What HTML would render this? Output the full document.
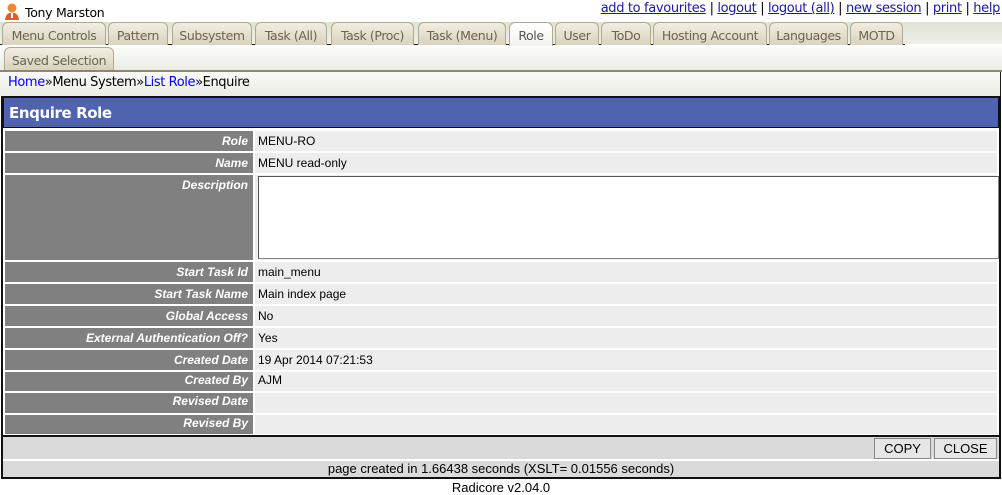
<!DOCTYPE html>
<html><head><style>
*{margin:0;padding:0;box-sizing:border-box}
body{width:1002px;height:494px;background:#fff;font-family:Tahoma,"DejaVu Sans",sans-serif;font-size:13px;position:relative;overflow:hidden}
.a{position:absolute}
.t{position:absolute;top:22px;height:23px;border:1px solid #b3a98a;border-bottom:none;border-radius:6px 6px 0 0;background:linear-gradient(#f1eee3,#d8d2bd);color:#6d6450;font-size:12.5px;line-height:25px;text-align:center;font-family:"DejaVu Sans",sans-serif;letter-spacing:-0.4px}
.lnk a{color:#1a1a9e;text-decoration:underline}
.lb{position:absolute;left:5px;width:248px;background:#808080;color:#fff;font:italic bold 12px "Liberation Sans",Arial,sans-serif;text-align:right;padding-right:5px;line-height:20px}
.vl{position:absolute;left:255px;width:742px;background:#ededed;font:12px "Liberation Sans",Arial,sans-serif;padding-left:3px;line-height:20px}
.btn{position:absolute;top:438px;height:21px;border:1px solid #888;background:#e6e6e6;font:13px "Liberation Sans",Arial,sans-serif;text-align:center;line-height:19px}
</style></head><body>
<div class="a" style="left:4px;top:2px;width:16px;height:18px">
<svg width="16" height="18"><circle cx="8" cy="6" r="4.5" fill="#e88a3a"/><path d="M1 18 Q2 10 8 11 Q14 10 15 18Z" fill="#d9602a"/><rect x="7" y="11" width="2" height="5" fill="#fff"/></svg></div>
<div class="a" style="left:25px;top:5px;font-family:'DejaVu Sans',sans-serif;font-size:12.5px;letter-spacing:-0.3px">Tony Marston</div>
<div class="a lnk" style="right:2px;top:1px;font-family:'DejaVu Sans',sans-serif;font-size:13px;letter-spacing:-0.35px"><a>add to favourites</a> | <a>logout</a> | <a>logout (all)</a> | <a>new session</a> | <a>print</a> | <a>help</a></div>
<div class="a" style="left:0;top:22px;width:1002px;height:23px;background:linear-gradient(#dfe3d6,#eef0ea)"></div>
<div class="a" style="left:0;top:44px;width:1002px;height:27px;background:linear-gradient(#fff,#e9e9e5)"></div>
<div class="a" style="left:0;top:44px;width:905px;height:1px;background:#222"></div>
<div class="t" style="left:2px;width:104px">Menu Controls</div>
<div class="t" style="left:108px;width:60px">Pattern</div>
<div class="t" style="left:172px;width:80px">Subsystem</div>
<div class="t" style="left:255px;width:72px">Task (All)</div>
<div class="t" style="left:331px;width:83px">Task (Proc)</div>
<div class="t" style="left:418px;width:88px">Task (Menu)</div>
<div class="t" style="left:509px;width:44px;height:24px;background:linear-gradient(#fff,#f3f3ee);color:#555">Role</div>
<div class="t" style="left:555px;width:44px">User</div>
<div class="t" style="left:601px;width:50px">ToDo</div>
<div class="t" style="left:653px;width:114px">Hosting Account</div>
<div class="t" style="left:769px;width:79px">Languages</div>
<div class="t" style="left:850px;width:53px">MOTD</div>
<div class="t" style="left:4px;top:47px;width:110px">Saved Selection</div>
<div class="a" style="left:0;top:70px;width:1002px;height:2px;background:#8f8570"></div>
<div class="a" style="left:0;top:72px;width:1001px;height:24px;border-right:1px solid #222;background:linear-gradient(#fafaf6,#ececE6)"></div>
<div class="a" style="left:8px;top:75px;font-family:'DejaVu Sans',sans-serif;font-size:13px;letter-spacing:-0.4px"><span style="color:#00f">Home</span>»Menu System»<span style="color:#00f">List Role</span>»Enquire</div>
<div class="a" style="left:1px;top:96px;width:1000px;height:383px;border:2px solid #111;background:#fff"></div>
<div class="a" style="left:3px;top:98px;width:996px;height:30px;background:#4f63ae;border:1px solid #111;border-top:none"></div>
<div class="a" style="left:9px;top:104px;color:#fff;font:bold 15px 'DejaVu Sans',sans-serif;letter-spacing:-0.4px">Enquire Role</div>
<div class="lb" style="top:131px;height:20px">Role</div><div class="vl" style="top:131px;height:20px">MENU-RO</div>
<div class="lb" style="top:153px;height:20px">Name</div><div class="vl" style="top:153px;height:20px">MENU read-only</div>
<div class="lb" style="top:175px;height:85px">Description</div><div class="vl" style="top:175px;height:85px"><div style="position:absolute;left:3px;top:1px;width:741px;height:83px;background:#fff;border:1px solid #888;border-top-color:#555;border-left-color:#555"></div></div>
<div class="lb" style="top:262px;height:20px">Start Task Id</div><div class="vl" style="top:262px;height:20px">main_menu</div>
<div class="lb" style="top:284px;height:20px">Start Task Name</div><div class="vl" style="top:284px;height:20px">Main index page</div>
<div class="lb" style="top:306px;height:20px">Global Access</div><div class="vl" style="top:306px;height:20px">No</div>
<div class="lb" style="top:328px;height:20px">External Authentication Off?</div><div class="vl" style="top:328px;height:20px">Yes</div>
<div class="lb" style="top:350px;height:20px">Created Date</div><div class="vl" style="top:350px;height:20px">19 Apr 2014 07:21:53</div>
<div class="lb" style="top:372px;height:19px;line-height:17px">Created By</div><div class="vl" style="top:372px;height:19px;line-height:17px">AJM</div>
<div class="lb" style="top:393px;height:20px;line-height:17px">Revised Date</div><div class="vl" style="top:393px;height:20px"></div>
<div class="lb" style="top:415px;height:19px;line-height:17px">Revised By</div><div class="vl" style="top:415px;height:19px"></div>
<div class="a" style="left:3px;top:435px;width:996px;height:2px;background:#111"></div>
<div class="a" style="left:3px;top:437px;width:996px;height:22px;background:#dadada"></div>
<div class="btn" style="left:874px;width:57px">COPY</div>
<div class="btn" style="left:934px;width:63px">CLOSE</div>
<div class="a" style="left:3px;top:461px;width:996px;height:16px;background:#dadada;text-align:center;font:13px 'Liberation Sans',Arial,sans-serif;line-height:16px">page created in 1.66438 seconds (XSLT= 0.01556 seconds)</div>
<div class="a" style="left:0;top:480px;width:1002px;text-align:center;font:13px 'Liberation Sans',Arial,sans-serif">Radicore v2.04.0</div>
</body></html>
